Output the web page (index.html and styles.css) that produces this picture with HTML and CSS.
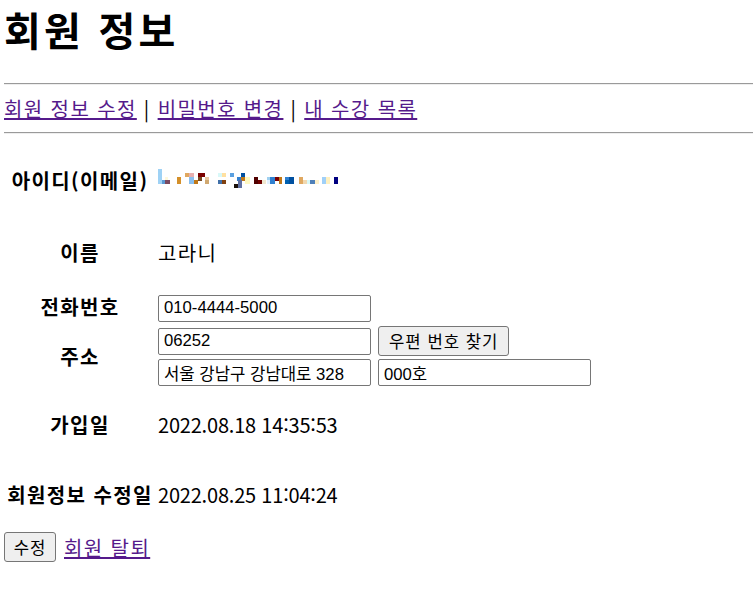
FILE: index.html
```html
<!DOCTYPE html>
<html lang="ko">
<head>
    <meta charset="UTF-8">
    <meta name="viewport" content="width=device-width, initial-scale=1.0">
    <title>회원 정보</title>
    <link rel="stylesheet" href="styles.css">
</head>
<body>
    <h1>회원 정보</h1>
    <hr>
    <div class="menu">
        <a href="#">회원 정보 수정</a> | <a href="#">비밀번호 변경</a> | <a href="#">내 수강 목록</a>
    </div>
    <hr>
    <form>
        <table class="info">
            <tr class="r1">
                <th>아이디(이메일)</th>
                <td>
                    <!-- 이메일 모자이크 -->
                    <svg class="mosaic" width="182" height="20" viewBox="0 0 182 20">
                        <rect x="0" y="0" width="4" height="15" fill="#9fd2f5"/>
                        <rect x="4" y="11" width="3" height="4" fill="#5b9bd5"/>
                        <rect x="7" y="8" width="3" height="3" fill="#fff8dc"/>
                        <rect x="7" y="11" width="5" height="4" fill="#7a4a60"/>
                        <rect x="19" y="8" width="4" height="7" fill="#d4902a"/>
                        <rect x="27" y="4" width="4" height="4" fill="#e0a860"/>
                        <rect x="31" y="4" width="5" height="4" fill="#e8b0b0"/>
                        <rect x="31" y="8" width="5" height="7" fill="#8ac0f0"/>
                        <rect x="36" y="11" width="4" height="4" fill="#c07818"/>
                        <rect x="40" y="8" width="4" height="4" fill="#7a4a20"/>
                        <rect x="40" y="4" width="7" height="4" fill="#7a0000"/>
                        <rect x="47" y="8" width="4" height="4" fill="#e8c8a0"/>
                        <rect x="47" y="11" width="4" height="4" fill="#d0a870"/>
                        <rect x="60" y="4" width="4" height="4" fill="#d8f8f8"/>
                        <rect x="64" y="4" width="4" height="4" fill="#ffe0a0"/>
                        <rect x="60" y="11" width="4" height="4" fill="#4070a8"/>
                        <rect x="64" y="11" width="4" height="4" fill="#804010"/>
                        <rect x="72" y="4" width="4" height="4" fill="#5aa0e0"/>
                        <rect x="79" y="8" width="4" height="4" fill="#3080d0"/>
                        <rect x="83" y="4" width="4" height="4" fill="#0050a0"/>
                        <rect x="83" y="8" width="4" height="4" fill="#c07818"/>
                        <rect x="76" y="15" width="4" height="4" fill="#1a1008"/>
                        <rect x="80" y="11" width="4" height="8" fill="#6070a0"/>
                        <rect x="87" y="8" width="5" height="7" fill="#fff8c0"/>
                        <rect x="96" y="8" width="4" height="7" fill="#500000"/>
                        <rect x="100" y="11" width="4" height="4" fill="#700000"/>
                        <rect x="104" y="11" width="4" height="4" fill="#f0e8d0"/>
                        <rect x="109" y="8" width="3" height="4" fill="#a0d0f0"/>
                        <rect x="109" y="11" width="3" height="4" fill="#e0f0ff"/>
                        <rect x="112" y="8" width="5" height="7" fill="#3080d0"/>
                        <rect x="117" y="8" width="4" height="4" fill="#7a0000"/>
                        <rect x="121" y="8" width="3" height="7" fill="#c07818"/>
                        <rect x="127" y="8" width="4" height="4" fill="#3080d0"/>
                        <rect x="127" y="11" width="4" height="4" fill="#0060b0"/>
                        <rect x="131" y="8" width="5" height="7" fill="#0050a0"/>
                        <rect x="141" y="8" width="4" height="7" fill="#e0a860"/>
                        <rect x="145" y="11" width="4" height="4" fill="#f0d8b0"/>
                        <rect x="149" y="11" width="3" height="4" fill="#d8f8f8"/>
                        <rect x="152" y="11" width="5" height="4" fill="#5080b8"/>
                        <rect x="157" y="11" width="4" height="4" fill="#fff0c8"/>
                        <rect x="164" y="8" width="4" height="7" fill="#a0d0f8"/>
                        <rect x="168" y="8" width="4" height="7" fill="#fff0c0"/>
                        <rect x="176" y="8" width="4" height="7" fill="#000080"/>
                    </svg>
                </td>
            </tr>
            <tr class="r2">
                <th>이름</th>
                <td>고라니</td>
            </tr>
            <tr class="r3">
                <th>전화번호</th>
                <td><input type="text" value="010-4444-5000"></td>
            </tr>
            <tr class="r4">
                <th>주소</th>
                <td>
                    <div class="line">
                        <input type="text" value="06252">
                        <button type="button">우편 번호 찾기</button>
                    </div>
                    <div class="line">
                        <input type="text" value="서울 강남구 강남대로 328">
                        <input type="text" value="000호">
                    </div>
                </td>
            </tr>
            <tr class="r5">
                <th>가입일</th>
                <td class="date">2022.08.18 14:35:53</td>
            </tr>
            <tr class="r6">
                <th>회원정보 수정일</th>
                <td class="date">2022.08.25 11:04:24</td>
            </tr>
        </table>
        <div class="actions">
            <button type="submit">수정</button>
            <a href="#">회원 탈퇴</a>
        </div>
    </form>
</body>
</html>
```

FILE: styles.css
```css
body {
    font-family: "Noto Sans CJK KR", "Malgun Gothic", sans-serif;
    font-size: 20px;
    letter-spacing: 1.4px;
    color: #000;
    background: #fff;
    margin: 0 0 0 4px;
}
h1 {
    font-size: 40px;
    letter-spacing: 3.2px;
    line-height: 58px;
    margin: 0;
}
hr {
    margin: 0;
    border: none;
    border-top: 1px solid #9a9a9a;
    border-bottom: 1px solid #eeeeee;
}
h1 + hr {
    margin-top: 25px;
}
.menu {
    line-height: 47px;
}
a {
    color: #551a8b;
}
.info {
    border-collapse: collapse;
    margin-top: 10px;
}
.info th {
    width: 152px;
    padding: 0;
    text-align: center;
    font-weight: bold;
}
.info td {
    padding: 0 0 0 2px;
}
.info .date {
    letter-spacing: -0.2px;
}
.r1 { height: 72px; }
.r2 { height: 72px; }
.r3 { height: 36px; }
.r4 { height: 64px; }
.r5 { height: 72px; }
.r6 { height: 68px; }
.mosaic {
    display: block;
    margin-top: -2px;
}
.line {
    display: flex;
    gap: 7px;
    align-items: center;
}
.line + .line {
    margin-top: 3px;
}
input {
    font-family: "Liberation Sans", "Noto Sans CJK KR", sans-serif;
    font-size: 16.7px;
    letter-spacing: 0;
    width: 213px;
    height: 27px;
    box-sizing: border-box;
    padding: 1px 5px;
    border: 1px solid #767676;
    border-radius: 2px;
    margin: 0;
}
button {
    font-family: "Noto Sans CJK KR", sans-serif;
    font-size: 16.7px;
    letter-spacing: 1px;
    background: #efefef;
    border: 1px solid #767676;
    border-radius: 3px;
    padding: 0 10px;
    height: 30px;
    margin: 0;
}
.actions {
    display: flex;
    align-items: center;
    gap: 8px;
    margin-top: 4px;
}
.actions button {
    width: 52px;
    padding: 0;
}
```
